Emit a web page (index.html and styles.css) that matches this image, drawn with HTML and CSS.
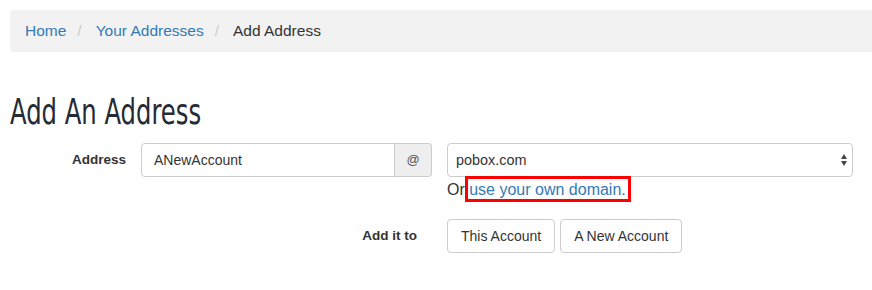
FILE: index.html
```html
<!DOCTYPE html>
<html lang="en">
<head>
    <meta charset="UTF-8">
    <title>Add Address</title>
    <link rel="stylesheet" href="styles.css">
</head>
<body>

    <ol class="breadcrumb">
        <li><a href="#">Home</a></li>
        <li><a href="#">Your Addresses</a></li>
        <li class="active">Add Address</li>
    </ol>

    <h1 class="page-title">Add An Address</h1>

    <form class="address-form">
        <div class="form-row">
            <label class="form-label" for="localPart">Address</label>
            <div class="input-group">
                <input type="text" id="localPart" class="form-control" value="ANewAccount">
                <span class="addon">@</span>
            </div>
            <div class="domain-col">
                <div class="select-wrap">
                    <select class="form-control domain-select">
                        <option>pobox.com</option>
                    </select>
                    <!-- flechas do select nativo -->
                    <svg class="select-arrows" width="6" height="13" viewBox="0 0 6 13">
                        <polygon points="0,5 3,0 6,5" fill="#444"/>
                        <polygon points="0,7 6,7 3,12" fill="#444"/>
                    </svg>
                </div>
                <p class="help-block">Or <a class="own-domain" href="#">use your own domain.</a></p>
            </div>
        </div>

        <div class="form-row">
            <label class="form-label wide">Add it to</label>
            <div class="btn-row">
                <button type="button" class="btn">This Account</button>
                <button type="button" class="btn">A New Account</button>
            </div>
        </div>
    </form>

</body>
</html>
```

FILE: styles.css
```css
/* Estilos gerais */
body {
    font-family: "Liberation Sans", Arial, sans-serif;
    font-size: 14px;
    color: #333;
    margin: 0;
    padding: 10px 0 0 10px;
    overflow: hidden;
    background-color: #fff;
}
a {
    color: #337ab7;
    text-decoration: none;
}

/* Breadcrumb */
.breadcrumb {
    list-style: none;
    margin: 0 0 41px 0;
    padding: 0 15px;
    height: 42px;
    display: flex;
    align-items: center;
    background-color: #f2f2f2;
    border-radius: 4px 0 0 4px;
    font-size: 15.5px;
}
.breadcrumb li + li::before {
    content: "/";
    color: #ccc;
    padding: 0 14px 0 11px;
}
.breadcrumb .active {
    color: #333;
}

/* Titulo */
.page-title {
    font-family: "DejaVu Sans Condensed", "DejaVu Sans", sans-serif;
    font-weight: normal;
    font-size: 36px;
    line-height: 38.5px;
    color: #252a33;
    margin: 0 0 11px 0;
    transform: scaleX(0.75);
    transform-origin: left center;
}

/* Formulario */
.form-row {
    display: flex;
    align-items: flex-start;
}
.form-row + .form-row {
    margin-top: 19px;
}
.form-label {
    width: 131px;
    box-sizing: border-box;
    padding-right: 15px;
    text-align: right;
    font-weight: bold;
    font-size: 13.5px;
    line-height: 34px;
}
.form-label.wide {
    width: 422px;
}
.form-control {
    height: 34px;
    box-sizing: border-box;
    border: 1px solid #ccc;
    border-radius: 4px;
    font-family: "Liberation Sans", Arial, sans-serif;
    font-size: 14px;
    color: #333;
    background-color: #fff;
    outline: none;
}
.input-group {
    display: flex;
    width: 291px;
}
.input-group .form-control {
    flex: 1;
    min-width: 0;
    padding: 0 12px;
    border-radius: 4px 0 0 4px;
}
.addon {
    width: 37px;
    height: 34px;
    box-sizing: border-box;
    border: 1px solid #ccc;
    border-left: none;
    border-radius: 0 4px 4px 0;
    background-color: #eee;
    color: #555;
    display: flex;
    align-items: center;
    justify-content: center;
    font-size: 13px;
}
.domain-col {
    width: 406px;
    margin-left: 15px;
}
.select-wrap {
    position: relative;
}
.domain-select {
    width: 100%;
    -webkit-appearance: none;
    appearance: none;
    padding: 0 8px;
    font-size: 14.4px;
}
.select-arrows {
    position: absolute;
    right: 6px;
    top: 11px;
    pointer-events: none;
}
.help-block {
    position: relative;
    margin: 3px 0 0 0;
    font-size: 16px;
    line-height: 20px;
    color: #333;
}
/* destaque vermelho em volta do link */
.own-domain {
    display: inline-block;
    line-height: 19px;
    padding: 1px 2px 0 1px;
    margin: -4px -5px -3px -4px;
    border: 3px solid #f00;
}

/* Botoes */
.btn-row {
    display: flex;
    gap: 5px;
    margin-left: 15px;
}
.btn {
    height: 34px;
    padding: 0 13px;
    border: 1px solid #ccc;
    border-radius: 4px;
    background-color: #fff;
    color: #333;
    font-family: "Liberation Sans", Arial, sans-serif;
    font-size: 14px;
    cursor: pointer;
}
```
